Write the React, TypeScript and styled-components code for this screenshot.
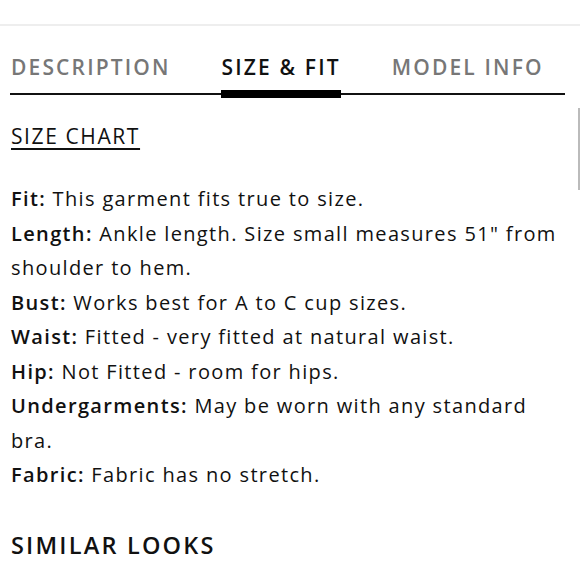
import styled, { createGlobalStyle } from 'styled-components';

const GlobalStyle = createGlobalStyle`
  body {
    margin: 0;
    background: #fff;
    font-family: "Open Sans", Lato, sans-serif;
    color: #111;
  }
`;

const Page = styled.div`
  position: relative;
  width: 580px;
  height: 580px;
  overflow: hidden;
  background: #fff;
`;

const TopRule = styled.div`
  margin-top: 24px;
  height: 2px;
  background: #eeeeee;
`;

const TabBar = styled.nav`
  display: flex;
  margin: 27px 15px 0 10px;
  border-bottom: 2px solid #111;
  gap: 50px;
`;

const Tab = styled.div<{ $active?: boolean }>`
  position: relative;
  padding: 0 0 12px 1px;
  font-size: 21px;
  font-weight: 600;
  letter-spacing: 2.15px;
  color: ${(p) => (p.$active ? '#111' : '#777')};

  &::after {
    content: '';
    display: ${(p) => (p.$active ? 'block' : 'none')};
    position: absolute;
    left: 0;
    right: 0;
    bottom: -5px;
    height: 8px;
    background: #000;
  }
`;

const Content = styled.div`
  padding: 27px 15px 0 11px;
`;

const ChartLink = styled.a`
  display: inline-block;
  font-size: 21px;
  letter-spacing: 1.6px;
  color: #111;
  text-decoration: underline;
  text-underline-offset: 4px;
  text-decoration-thickness: 1.5px;
`;

const Specs = styled.div`
  margin-top: 32px;
  font-size: 20px;
  line-height: 34.5px;
  letter-spacing: 1.35px;
`;

const Spec = styled.p`
  margin: 0;
  b {
    font-weight: 600;
  }
`;

const Section = styled.h2`
  margin: 36px 0 0;
  font-size: 23.5px;
  font-weight: 600;
  letter-spacing: 2.2px;
`;

const Scroll = styled.div`
  position: absolute;
  right: 0;
  top: 108px;
  width: 2px;
  height: 82px;
  background: #bbb;
`;

const specs: [string, string][] = [
  ['Fit:', 'This garment fits true to size.'],
  ['Length:', 'Ankle length. Size small measures 51" from shoulder to hem.'],
  ['Bust:', 'Works best for A to C cup sizes.'],
  ['Waist:', 'Fitted - very fitted at natural waist.'],
  ['Hip:', 'Not Fitted - room for hips.'],
  ['Undergarments:', 'May be worn with any standard bra.'],
  ['Fabric:', 'Fabric has no stretch.'],
];

export default function App() {
  return (
    <Page>
      <GlobalStyle />
      <TopRule />
      <TabBar>
        <Tab>DESCRIPTION</Tab>
        <Tab $active>SIZE &amp; FIT</Tab>
        <Tab>MODEL INFO</Tab>
      </TabBar>
      <Content>
        <ChartLink>SIZE CHART</ChartLink>
        <Specs>
          {specs.map(([k, v]) => (
            <Spec key={k}>
              <b>{k}</b> {v}
            </Spec>
          ))}
        </Specs>
        <Section>SIMILAR LOOKS</Section>
      </Content>
      <Scroll />
    </Page>
  );
}
